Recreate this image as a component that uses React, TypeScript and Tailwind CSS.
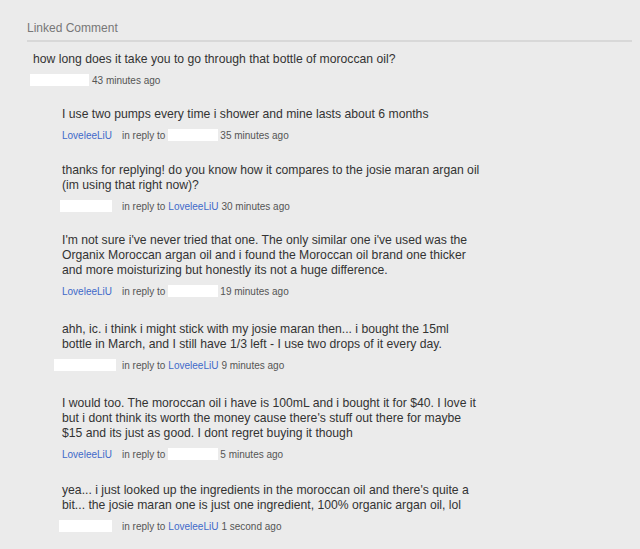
import React from 'react'

type Reply = {
  lines: string[]
  mine: boolean
  time: string
  box: [number, number]
  gap: number
}

const replies: Reply[] = [
  {
    lines: ['I use two pumps every time i shower and mine lasts about 6 months'],
    mine: true,
    time: '35 minutes ago',
    box: [50, 0],
    gap: 20,
  },
  {
    lines: [
      'thanks for replying! do you know how it compares to the josie maran argan oil',
      '(im using that right now)?',
    ],
    mine: false,
    time: '30 minutes ago',
    box: [52, -2],
    gap: 21,
  },
  {
    lines: [
      "I'm not sure i've never tried that one. The only similar one i've used was the",
      'Organix Moroccan argan oil and i found the Moroccan oil brand one thicker',
      'and more moisturizing but honestly its not a huge difference.',
    ],
    mine: true,
    time: '19 minutes ago',
    box: [50, 0],
    gap: 20,
  },
  {
    lines: [
      'ahh, ic. i think i might stick with my josie maran then... i bought the 15ml',
      'bottle in March, and I still have 1/3 left - I use two drops of it every day.',
    ],
    mine: false,
    time: '9 minutes ago',
    box: [62, -8],
    gap: 24,
  },
  {
    lines: [
      'I would too. The moroccan oil i have is 100mL and i bought it for $40. I love it',
      "but i dont think its worth the money cause there's stuff out there for maybe",
      '$15 and its just as good. I dont regret buying it though',
    ],
    mine: true,
    time: '5 minutes ago',
    box: [50, 0],
    gap: 24,
  },
  {
    lines: [
      "yea... i just looked up the ingredients in the moroccan oil and there's quite a",
      'bit... the josie maran one is just one ingredient, 100% organic argan oil, lol',
    ],
    mine: false,
    time: '1 second ago',
    box: [53, -3],
    gap: 22,
  },
]

const Blank = ({ w, ml = 0 }: { w: number; ml?: number }) => (
  <span className="inline-block h-[12px] bg-white" style={{ width: w, marginLeft: ml }} />
)

const Name = () => <span className="text-[#4169c9]">LoveleeLiU</span>

export default function App() {
  return (
    <div className="w-[640px] h-[549px] overflow-hidden bg-[#ebebeb] font-['Liberation_Sans',Arial,sans-serif] text-[#333]">
      <div className="pt-[20px] pl-[27px] pr-[8px]">
        <div className="text-[12px] leading-[16px] text-[#777] pb-[4px] border-b-2 border-[#d8d8d8]">
          Linked Comment
        </div>
      </div>

      <div className="pl-[33px] pt-[10px]">
        <p className="text-[12.2px] leading-[15px]">
          how long does it take you to go through that bottle of moroccan oil?
        </p>
        <div className="mt-[6px] flex items-center h-[14px] text-[10px] text-[#555]">
          <Blank w={59} ml={-3} />
          <span className="ml-[3px]">43 minutes ago</span>
        </div>
      </div>

      <div className="pl-[62px]">
        {replies.map((r, i) => (
          <div key={i} style={{ marginTop: r.gap }}>
            <p className="text-[12.2px] leading-[15px]">
              {r.lines.map((l, j) => (
                <React.Fragment key={j}>
                  {l}
                  {j < r.lines.length - 1 && <br />}
                </React.Fragment>
              ))}
            </p>
            <div className="mt-[6px] flex items-center h-[14px] text-[10px] text-[#555]">
              <span className="w-[60px] flex items-center">
                {r.mine ? <Name /> : <Blank w={r.box[0]} ml={r.box[1]} />}
              </span>
              <span>in reply to</span>
              {r.mine ? (
                <>
                  <Blank w={50} ml={3} />
                  <span className="ml-[2px]">{r.time}</span>
                </>
              ) : (
                <>
                  <span className="ml-[3px]">
                    <Name />
                  </span>
                  <span className="ml-[3px]">{r.time}</span>
                </>
              )}
            </div>
          </div>
        ))}
      </div>
    </div>
  )
}
